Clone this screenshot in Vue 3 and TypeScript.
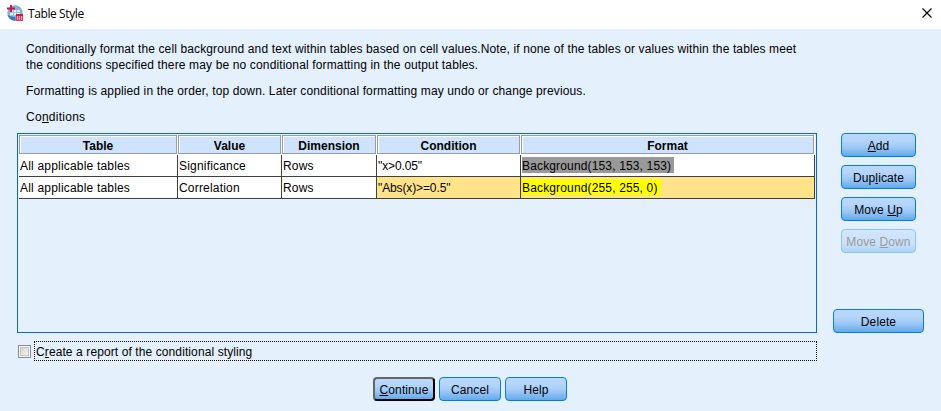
<script setup lang="ts">
import { ref } from 'vue'

interface Condition {
  table: string
  value: string
  dimension: string
  condition: string
  format: string
  tone: string
  selected: boolean
}

const headers: string[] = ['Table', 'Value', 'Dimension', 'Condition', 'Format']

const conditions = ref<Condition[]>([
  { table: 'All applicable tables', value: 'Significance', dimension: 'Rows', condition: '"x>0.05"', format: 'Background(153, 153, 153)', tone: 'gray', selected: false },
  { table: 'All applicable tables', value: 'Correlation', dimension: 'Rows', condition: '"Abs(x)>=0.5"', format: 'Background(255, 255, 0)', tone: 'yellow', selected: true },
])
</script>

<template>
  <div class="dialog">
    <header class="titlebar">
      <svg class="logo" width="16" height="16" viewBox="0 0 16 16">
        <circle cx="8" cy="8" r="7.700" fill="#7fb0de" />
        <path d="M.5 10a7.700 7.700 0 0 0 8 5.700v-3.200L3 11z" fill="#3f78b8" />
        <path d="M3 5h10v6H3z" fill="#e6f1fb" />
        <path d="M3 7.500h10M3 10.500h10M6.500 5v6M9.500 5v6" stroke="#9dc0e4" fill="none" />
        <path d="M4 0v7M0 3.500h8" stroke="#d4143c" stroke-width="2" />
        <path d="M9 9h7v7H9z" fill="#d8405e" />
        <path d="M9 9h7v2H9z" fill="#c81c40" />
        <path d="M10 11.500h1v1h-1zM12 11.500h1v1h-1zM14 11.500h1v1h-1zM10 13.500h1v1h-1zM12 13.500h1v1h-1zM14 13.500h1v1h-1z" fill="#fff" />
      </svg>
      <span class="title">Table Style</span>
      <svg class="close" width="10" height="10" viewBox="0 0 10 10">
        <path d="M.5 .5l9 9M9.500 .5l-9 9" stroke="#000" stroke-width="1.200" />
      </svg>
    </header>

    <section class="intro">
      <p class="line"><span class="l1">Conditionally format the cell background and text within tables based on cell values.Note, if none of the tables or values within the tables meet</span></p>
      <p class="line"><span class="l2">the conditions specified there may be no conditional formatting in the output tables.</span></p>
      <p class="line gap"><span class="l3">Formatting is applied in the order, top down. Later conditional formatting may undo or change previous.</span></p>
      <p class="line gap"><span class="l4">Co<u>n</u>ditions</span></p>
    </section>

    <main class="content">
      <div class="panel">
        <div class="grid">
          <div v-for="h in headers" :key="h" class="th"><div class="th-box">{{ h }}</div></div>
          <template v-for="(c, i) in conditions" :key="i">
            <div class="td">{{ c.table }}</div>
            <div class="td">{{ c.value }}</div>
            <div class="td">{{ c.dimension }}</div>
            <div class="td expression" :class="{ selected: c.selected }">{{ c.condition }}</div>
            <div class="td" :class="{ selected: c.selected }"><span class="swatch" :class="c.tone">{{ c.format }}</span></div>
          </template>
        </div>
      </div>
      <aside class="side">
        <button class="btn"><span><u>A</u>dd</span></button>
        <button class="btn"><span>Dup<u>l</u>icate</span></button>
        <button class="btn"><span>Move <u>U</u>p</span></button>
        <button class="btn" disabled><span>Move <u>D</u>own</span></button>
        <button class="btn delete"><span>Delete</span></button>
      </aside>
    </main>

    <div class="report">
      <span class="check"></span>
      <span class="focus">C<u>r</u>eate a report of the conditional styling</span>
    </div>

    <footer class="actions">
      <button class="btn default"><span><u>C</u>ontinue</span></button>
      <button class="btn"><span>Cancel</span></button>
      <button class="btn"><span>Help</span></button>
    </footer>
  </div>
</template>

<style>
body { margin: 0; overflow: hidden; }
</style>

<style scoped>
* { box-sizing: border-box; }
.dialog {
  width: 941px;
  height: 411px;
  background: #e4f0fc;
  color: #000;
  font: 12px/16px "Liberation Sans", Arial, sans-serif;
  white-space: nowrap;
  overflow: hidden;
}
u { text-decoration: underline; text-decoration-thickness: 1px; text-underline-offset: 1px; text-decoration-skip-ink: none; }
.titlebar {
  height: 29px;
  background: #fff;
  display: flex;
  align-items: center;
  padding: 0 9px 3px 7px;
}
.title { font: 12px/16px "Open Sans", sans-serif; margin-left: 5px; padding-top: 2px; letter-spacing: -.4px; }
.close { margin-left: auto; }
.intro { height: 104px; padding: 12px 0 0 26px; }
.line { margin: 0; height: 16px; }
.line.gap { margin-top: 10px; }
.l1 { letter-spacing: .123px; }
.l2 { letter-spacing: .14px; }
.l3 { letter-spacing: .132px; }
.l4 { letter-spacing: .26px; }
.content { height: 200px; padding-left: 17px; display: flex; }
.panel { width: 800px; height: 200px; border: 1px solid #0f68b8; padding: 1px; }
.grid { width: 796px; display: grid; grid-template-columns: 159px 104px 95px 144px 294px; grid-template-rows: 20px 22px 22px; }
.th { background: #fff; padding: 0 1px 1px 0; }
.th-box {
  height: 19px;
  border: 1px solid #929cb4;
  box-shadow: inset 1px 1px 0 #fff;
  background: #cfe3fc;
  font-weight: bold;
  line-height: 20px;
  text-align: center;
}
.td { background: #fff; border-right: 1px solid #404040; border-bottom: 1px solid #404040; padding: 2px 0 0 1px; line-height: 18px; letter-spacing: .19px; }
.td.selected { background: #ffe38b; }
.td.expression { letter-spacing: -.12px; }
.swatch { display: block; width: fit-content; height: 16px; padding-right: 3px; letter-spacing: .15px; }
.gray { background: #999; }
.yellow { background: #ff0; }
.side { margin-left: 16px; width: 91px; display: flex; flex-direction: column; align-items: center; gap: 8px; }
.btn {
  flex: none;
  width: 75px;
  height: 24px;
  padding: 2px 0 0;
  border: 1px solid #087bdc;
  border-radius: 4px;
  background: linear-gradient(#b9d8fb 0%, #b3d4fa 35%, #9dc8f7 60%, #62aaea 100%);
  color: #000;
  font: inherit;
  line-height: 16px;
  text-align: center;
  letter-spacing: .1px;
}
.btn:disabled { border-color: #8fc4f2; background: linear-gradient(#d2e6fc, #cbe2fb 60%, #b0d4f5); color: #999; }
.btn.delete { width: 91px; margin-top: 48px; }
.report { height: 22px; margin-top: 7px; padding-left: 17px; display: flex; align-items: center; }
.check {
  width: 13px;
  height: 13px;
  margin-left: 1px;
  border: 1px solid #8c8c8c;
  box-shadow: inset 0 0 0 1px #f8f8f8, inset 0 0 0 2px #c2c2c2;
  background: linear-gradient(135deg, #cfcfcf, #fafafa);
}
.focus { width: 783px; height: 20px; margin-left: 3px; border: 1px dotted #000; padding: 1px 0 0 1px; line-height: 18px; letter-spacing: .1px; }
.actions { display: flex; gap: 4px; margin: 15px 0 0 373px; }
.actions .btn { width: 62px; }
.actions .btn.default { border: 2px solid #000; border-top-color: #666; border-left-color: #666; padding-top: 1px; }
</style>
